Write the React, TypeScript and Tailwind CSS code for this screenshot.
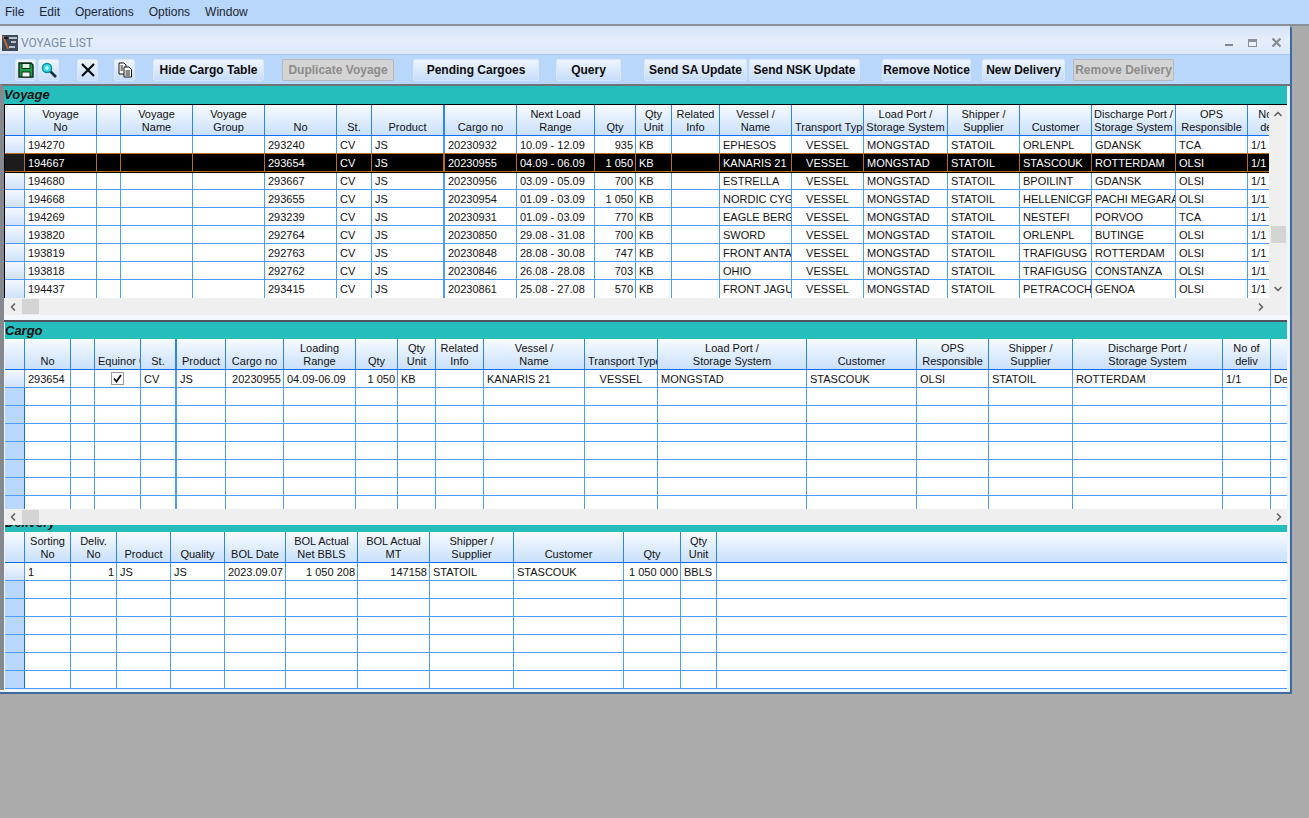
import React from 'react';
import { ChevronLeft, ChevronRight, ChevronUp, ChevronDown } from 'lucide-react';

type Align = 'l' | 'r' | 'c';

interface Col {
  x: number;
  head: string[];
  align?: Align;
  thick?: boolean;
  headPad?: boolean;
}

const alignClass: Record<Align, string> = {
  l: 'text-left pl-[3px]',
  r: 'text-right pr-[2px]',
  c: 'text-center',
};

const voyageCols: Col[] = [
  { x: 96, head: ['Voyage', 'No'] },
  { x: 120, head: [] },
  { x: 192, head: ['Voyage', 'Name'] },
  { x: 264, head: ['Voyage', 'Group'] },
  { x: 336, head: ['No'] },
  { x: 371, head: ['St.'] },
  { x: 444, head: ['Product'], thick: true },
  { x: 516, head: ['Cargo no'] },
  { x: 594, head: ['Next Load', 'Range'] },
  { x: 635, head: ['Qty'], align: 'r' },
  { x: 671, head: ['Qty', 'Unit'] },
  { x: 719, head: ['Related', 'Info'] },
  { x: 791, head: ['Vessel /', 'Name'] },
  { x: 863, head: ['Transport Type'], align: 'c', headPad: true },
  { x: 947, head: ['Load Port /', 'Storage System'] },
  { x: 1019, head: ['Shipper /', 'Supplier'] },
  { x: 1091, head: ['Customer'] },
  { x: 1175, head: ['Discharge Port /', 'Storage System'] },
  { x: 1247, head: ['OPS', 'Responsible'] },
  { x: 1295, head: ['No of', 'deliv'] },
];

const voyageRows: string[][] = [
  ['194270', '', '', '', '293240', 'CV', 'JS', '20230932', '10.09 - 12.09', '935', 'KB', '', 'EPHESOS', 'VESSEL', 'MONGSTAD', 'STATOIL', 'ORLENPL', 'GDANSK', 'TCA', '1/1'],
  ['194667', '', '', '', '293654', 'CV', 'JS', '20230955', '04.09 - 06.09', '1 050', 'KB', '', 'KANARIS 21', 'VESSEL', 'MONGSTAD', 'STATOIL', 'STASCOUK', 'ROTTERDAM', 'OLSI', '1/1'],
  ['194680', '', '', '', '293667', 'CV', 'JS', '20230956', '03.09 - 05.09', '700', 'KB', '', 'ESTRELLA', 'VESSEL', 'MONGSTAD', 'STATOIL', 'BPOILINT', 'GDANSK', 'OLSI', '1/1'],
  ['194668', '', '', '', '293655', 'CV', 'JS', '20230954', '01.09 - 03.09', '1 050', 'KB', '', 'NORDIC CYG', 'VESSEL', 'MONGSTAD', 'STATOIL', 'HELLENICGF', 'PACHI MEGARA', 'OLSI', '1/1'],
  ['194269', '', '', '', '293239', 'CV', 'JS', '20230931', '01.09 - 03.09', '770', 'KB', '', 'EAGLE BERG', 'VESSEL', 'MONGSTAD', 'STATOIL', 'NESTEFI', 'PORVOO', 'TCA', '1/1'],
  ['193820', '', '', '', '292764', 'CV', 'JS', '20230850', '29.08 - 31.08', '700', 'KB', '', 'SWORD', 'VESSEL', 'MONGSTAD', 'STATOIL', 'ORLENPL', 'BUTINGE', 'OLSI', '1/1'],
  ['193819', '', '', '', '292763', 'CV', 'JS', '20230848', '28.08 - 30.08', '747', 'KB', '', 'FRONT ANTA', 'VESSEL', 'MONGSTAD', 'STATOIL', 'TRAFIGUSG', 'ROTTERDAM', 'OLSI', '1/1'],
  ['193818', '', '', '', '292762', 'CV', 'JS', '20230846', '26.08 - 28.08', '703', 'KB', '', 'OHIO', 'VESSEL', 'MONGSTAD', 'STATOIL', 'TRAFIGUSG', 'CONSTANZA', 'OLSI', '1/1'],
  ['194437', '', '', '', '293415', 'CV', 'JS', '20230861', '25.08 - 27.08', '570', 'KB', '', 'FRONT JAGU', 'VESSEL', 'MONGSTAD', 'STATOIL', 'PETRACOCH', 'GENOA', 'OLSI', '1/1'],
];

const cargoCols: Col[] = [
  { x: 70, head: ['No'] },
  { x: 94, head: [] },
  { x: 140, head: ['Equinor C'], align: 'c', headPad: true },
  { x: 176, head: ['St.'], thick: true },
  { x: 225, head: ['Product'] },
  { x: 283, head: ['Cargo no'], align: 'r' },
  { x: 355, head: ['Loading', 'Range'] },
  { x: 397, head: ['Qty'], align: 'r' },
  { x: 435, head: ['Qty', 'Unit'] },
  { x: 483, head: ['Related', 'Info'] },
  { x: 584, head: ['Vessel /', 'Name'] },
  { x: 657, head: ['Transport Type'], align: 'c', headPad: true },
  { x: 806, head: ['Load Port /', 'Storage System'] },
  { x: 916, head: ['Customer'] },
  { x: 988, head: ['OPS', 'Responsible'] },
  { x: 1072, head: ['Shipper /', 'Supplier'] },
  { x: 1222, head: ['Discharge Port /', 'Storage System'] },
  { x: 1270, head: ['No of', 'deliv'] },
  { x: 1330, head: [] },
];

const deliveryCols: Col[] = [
  { x: 70, head: ['Sorting', 'No'] },
  { x: 116, head: ['Deliv.', 'No'], align: 'r' },
  { x: 170, head: ['Product'] },
  { x: 224, head: ['Quality'] },
  { x: 285, head: ['BOL Date'], align: 'r' },
  { x: 357, head: ['BOL Actual', 'Net BBLS'], align: 'r' },
  { x: 429, head: ['BOL Actual', 'MT'], align: 'r' },
  { x: 513, head: ['Shipper /', 'Supplier'] },
  { x: 623, head: ['Customer'] },
  { x: 680, head: ['Qty'], align: 'r' },
  { x: 716, head: ['Qty', 'Unit'] },
];

const Checkbox = () => (
  <span className="flex h-[13px] w-[13px] items-center justify-center border border-[#9a9a9a] bg-white">
    <svg width="9" height="9" viewBox="0 0 9 9">
      <path d="M1 4.5 L3.5 7.5 L8 1" fill="none" stroke="#111" strokeWidth="1.8" />
    </svg>
  </span>
);

const HeaderRow = ({ cols, start, filler }: { cols: Col[]; start: number; filler?: boolean }) => (
  <div className="flex h-[31px] shrink-0 border-b border-[#0f6ff0] bg-linear-to-b from-[#f8fbff] to-[#c9e0fc]">
    <div className="h-full shrink-0 border-r border-[#2a86f5]" style={{ width: 24 - start }} />
    {cols.map((c, i) => (
      <div
        key={i}
        className={`flex h-full shrink-0 flex-col justify-end overflow-hidden whitespace-nowrap border-[#2a86f5] pb-px text-center leading-[13px] ${c.thick ? 'border-r-2' : 'border-r'} ${c.headPad ? 'pl-[3px]' : ''}`}
        style={{ width: c.x - (i === 0 ? 24 : cols[i - 1].x) }}
      >
        {c.head.map(line => (
          <span key={line} className="block text-center">{line}</span>
        ))}
      </div>
    ))}
    {filler && <div className="flex-1" />}
  </div>
);

const DataRow = ({
  cols,
  start,
  cells,
  selected,
  orangeLine,
  solidIndicator,
  filler,
  noLine,
}: {
  cols: Col[];
  start: number;
  cells: React.ReactNode[];
  selected?: boolean;
  orangeLine?: boolean;
  solidIndicator?: boolean;
  filler?: boolean;
  noLine?: boolean;
}) => (
  <div
    className={`relative flex h-[18px] shrink-0 ${noLine ? '' : 'border-b'} ${selected ? 'z-10 bg-black text-white shadow-[0_1px_0_#000]' : 'bg-white'} ${selected || orangeLine ? 'border-[#b96c1c]' : 'border-[#4c9bff]'}`}
  >
    <div
      className={`h-full shrink-0 border-r ${selected ? 'border-[#b96c1c] bg-[#1c1c1c]' : solidIndicator ? 'border-[#0f6ff0] bg-[#b9d6fb]' : 'border-[#4c9bff] bg-linear-to-b from-[#f4f8fe] to-[#cfe2fb]'}`}
      style={{ width: 24 - start }}
    />
    {cols.map((c, i) => (
      <div
        key={i}
        className={`h-full shrink-0 overflow-hidden whitespace-nowrap leading-[19px] ${alignClass[c.align ?? 'l']} ${c.thick ? 'border-r-2' : 'border-r'} ${selected ? 'border-[#b96c1c]' : 'border-[#4c9bff]'}`}
        style={{ width: c.x - (i === 0 ? 24 : cols[i - 1].x) }}
      >
        {cells[i]}
      </div>
    ))}
    {filler && <div className="flex-1" />}
  </div>
);

const Thumb = ({ className }: { className: string }) => (
  <div className={`bg-[#d4d4d4] ${className}`} />
);

const ToolIcon = ({ className, children }: { className: string; children: React.ReactNode }) => (
  <button className={`flex h-[22px] w-[21px] shrink-0 items-center justify-center rounded-[2px] border border-[#d8e7fc] bg-linear-to-b from-[#eef5fe] to-[#c7ddfa] ${className}`}>
    {children}
  </button>
);

const toolButtons: { label: string; className: string; disabled?: boolean }[] = [
  { label: 'Hide Cargo Table', className: 'ml-[18px] w-[111px]' },
  { label: 'Duplicate Voyage', className: 'ml-[18px] w-[112px]', disabled: true },
  { label: 'Pending Cargoes', className: 'ml-[19px] w-[126px]' },
  { label: 'Query', className: 'ml-[17px] w-[65px]' },
  { label: 'Send SA Update', className: 'ml-[23px] w-[103px]' },
  { label: 'Send NSK Update', className: 'ml-[2px] w-[111px]' },
  { label: 'Remove Notice', className: 'ml-[22px] w-[89px]' },
  { label: 'New Delivery', className: 'ml-[11px] w-[83px]' },
  { label: 'Remove Delivery', className: 'ml-[8px] w-[101px]', disabled: true },
];

const SectionBand = ({ title }: { title: string }) => (
  <div className="h-full bg-[#26bdbd] text-[13px] font-bold italic leading-[17px] text-[#101010]">{title}</div>
);

export default function App() {
  return (
    <div className="flex h-[818px] w-[1309px] flex-col overflow-hidden bg-[#ababab] font-['Liberation_Sans',Arial,sans-serif] text-[11px] text-[#111]">
      {/* menu bar */}
      <div className="flex h-[26px] shrink-0 items-center gap-[15px] border-b-2 border-[#8a8f98] bg-[#b9d6fb] pb-px pl-[5px] text-[12px] text-[#1b2632]">
        {['File', 'Edit', 'Operations', 'Options', 'Window'].map(m => (
          <span key={m}>{m}</span>
        ))}
      </div>

      {/* voyage list window */}
      <div className="flex h-[668px] w-[1292px] shrink-0 flex-col rounded-tr-[3px] border-r-2 border-b-2 border-[#3c6aa5] bg-[#eef4fd]">
        <div className="flex h-[29px] shrink-0 items-center border-b border-[#a9c8f5] bg-linear-to-b from-[#d3e2f7] via-[#e6eefa] to-[#dbe7f8] pt-[5px] pl-[2px]">
          <svg width="16" height="16" viewBox="0 0 16 16" className="shrink-0">
            <rect width="16" height="16" fill="#3d4a5c" />
            <path d="M1 1 L6 14" stroke="#c06a28" strokeWidth="2" />
            <path d="M7 3 H15 M9 7 H14 M7 12 H13" stroke="#e6e6e6" strokeWidth="1.5" />
            <path d="M2 3 H6" stroke="#16202c" strokeWidth="2" />
          </svg>
          <span className="ml-[3px] font-['Roboto',sans-serif] text-[12px] text-[#768ba8]">VOYAGE LIST</span>
          <div className="ml-auto flex items-center pr-[9px]">
            <div className="mt-[4px] h-[2px] w-[8px] bg-[#7f8791]" />
            <div className="ml-[15px] h-[8px] w-[9px] border border-[#8b929b] border-t-[3px] bg-[#eef3fa]" />
            <svg width="9" height="9" viewBox="0 0 9 9" className="ml-[15px]">
              <path d="M0.5 0.5 L8.5 8.5 M8.5 0.5 L0.5 8.5" stroke="#858b93" strokeWidth="2.2" />
            </svg>
          </div>
        </div>

        {/* toolbar */}
        <div className="flex h-[29px] shrink-0 items-start bg-[#b9d6fb] pt-[4px] pl-[15px]">
          <ToolIcon className="w-[21px]">
            <svg width="16" height="16" viewBox="0 0 16 16">
              <path d="M1 1 H13 L15 3 V15 H1 Z" fill="#1fa14a" stroke="#0b2a14" strokeWidth="1.4" />
              <rect x="4" y="1.5" width="8" height="5" fill="#d9efe0" stroke="#0b2a14" />
              <rect x="4" y="10" width="8" height="5" fill="#f3f3f3" stroke="#0b2a14" />
            </svg>
          </ToolIcon>
          <ToolIcon className="ml-[2px]">
            <svg width="16" height="16" viewBox="0 0 16 16">
              <path d="M9 9 L15 15" stroke="#16304a" strokeWidth="2.6" />
              <circle cx="6" cy="6" r="4.5" fill="#35e0ea" stroke="#0d8a9e" strokeWidth="1.4" />
              <path d="M4 6 H8 M6 4 V8" stroke="#ffffff" strokeWidth="1" />
            </svg>
          </ToolIcon>
          <ToolIcon className="ml-[18px]">
            <svg width="16" height="16" viewBox="0 0 16 16">
              <path d="M2 2 L14 14 M14 2 L2 14" stroke="#0c0c0c" strokeWidth="2.2" />
            </svg>
          </ToolIcon>
          <ToolIcon className="ml-[16px]">
            <svg width="16" height="16" viewBox="0 0 16 16">
              <path d="M2 1 H7 L9 3 V12 H2 Z" fill="#fff" stroke="#111" />
              <path d="M7 5 H12 L14.5 7.5 V15 H7 Z" fill="#fff" stroke="#111" />
              <path d="M3.5 4 H6 M3.5 6 H6 M3.5 8 H6 M8.5 9 H13 M8.5 11 H13 M8.5 13 H13" stroke="#111" />
            </svg>
          </ToolIcon>
          {toolButtons.map(b => (
            <button
              key={b.label}
              className={`h-[22px] shrink-0 whitespace-nowrap rounded-[2px] border text-center text-[12px] font-bold ${b.className} ${b.disabled ? 'border-[#b9b9b9] bg-[#d4d4d4] text-[#8c8c8c]' : 'border-[#d8e7fc] bg-linear-to-b from-[#eef5fe] to-[#c7ddfa] text-[#0c0c0c]'}`}
            >
              {b.label}
            </button>
          ))}
        </div>

        {/* panels */}
        <div className="flex h-[606px] w-[1290px] shrink-0 flex-col border-t-2 border-l-4 border-t-[#6f7278] border-l-[#85888e]">
          {/* voyage */}
          <div className="h-[18px] w-[1283px] shrink-0">
            <SectionBand title="Voyage" />
          </div>
          <div className="flex h-[194px] w-[1283px] shrink-0 border-t border-l border-black">
            <div className="h-full w-[1264px] shrink-0 overflow-hidden">
              <div className="flex h-full w-[1400px] flex-col">
                <HeaderRow cols={voyageCols} start={4} />
                {voyageRows.map((row, i) => (
                  <DataRow key={i} cols={voyageCols} start={4} cells={row} selected={i === 1} orangeLine={i === 0} noLine={i === voyageRows.length - 1} />
                ))}
              </div>
            </div>
            <div className="flex h-full flex-1 flex-col items-center bg-[#efefef] pt-[3px] text-[#666]">
              <ChevronUp size={12} strokeWidth={3.5} className="shrink-0" />
              <Thumb className="mt-[106px] h-[17px] w-[15px] shrink-0" />
              <ChevronDown size={12} strokeWidth={3.5} className="mt-[40px] shrink-0" />
            </div>
          </div>
          <div className="flex h-[17px] w-[1283px] shrink-0 items-center bg-[#efefef] pl-[3px] text-[#666]">
            <ChevronLeft size={12} strokeWidth={3.5} />
            <Thumb className="ml-[3px] h-[15px] w-[17px]" />
            <ChevronRight size={12} strokeWidth={3.5} className="mr-[20px] ml-auto" />
          </div>
          <div className="h-[5px] shrink-0 bg-[#f4f7fc]" />

          {/* cargo */}
          <div className="h-[19px] w-[1283px] shrink-0 border-t-2 border-[#4f5258] pl-px">
            <SectionBand title="Cargo" />
          </div>
          <div className="ml-px h-[170px] w-[1282px] shrink-0 overflow-hidden">
            <div className="flex h-full w-[1400px] flex-col">
              <HeaderRow cols={cargoCols} start={4} />
              <DataRow
                cols={cargoCols}
                start={4}
                cells={[
                  '293654',
                  '',
                  <span key="chk" className="flex h-full items-center justify-center"><Checkbox /></span>,
                  'CV',
                  'JS',
                  '20230955',
                  '04.09-06.09',
                  '1 050',
                  'KB',
                  '',
                  'KANARIS 21',
                  'VESSEL',
                  'MONGSTAD',
                  'STASCOUK',
                  'OLSI',
                  'STATOIL',
                  'ROTTERDAM',
                  '1/1',
                  'Delivered',
                ]}
              />
              {[0, 1, 2, 3, 4, 5, 6].map(i => (
                <DataRow key={i} cols={cargoCols} start={4} cells={[]} solidIndicator />
              ))}
            </div>
          </div>
          <div className="relative z-10 ml-px flex h-[16px] w-[1282px] shrink-0 items-center bg-[#efefef] pl-[2px] text-[#666]">
            <ChevronLeft size={12} strokeWidth={3.5} />
            <Thumb className="ml-[3px] h-[15px] w-[17px]" />
            <ChevronRight size={12} strokeWidth={3.5} className="mr-[2px] ml-auto" />
          </div>

          {/* delivery, its title sits half under the cargo scrollbar */}
          <div className="ml-px h-[7px] w-[1282px] shrink-0 bg-[#26bdbd] text-[13px] font-bold italic leading-[17px] text-[#101010]">
            <div className="-mt-[11px]">Delivery</div>
          </div>
          <div className="ml-px flex w-[1282px] shrink-0 flex-col">
            <HeaderRow cols={deliveryCols} start={4} filler />
            <DataRow
              cols={deliveryCols}
              start={4}
              filler
              cells={['1', '1', 'JS', 'JS', '2023.09.07', '1 050 208', '147158', 'STATOIL', 'STASCOUK', '1 050 000', 'BBLS']}
            />
            {[0, 1, 2, 3, 4, 5].map(i => (
              <DataRow key={i} cols={deliveryCols} start={4} cells={[]} solidIndicator filler />
            ))}
          </div>
        </div>
      </div>
    </div>
  );
}
